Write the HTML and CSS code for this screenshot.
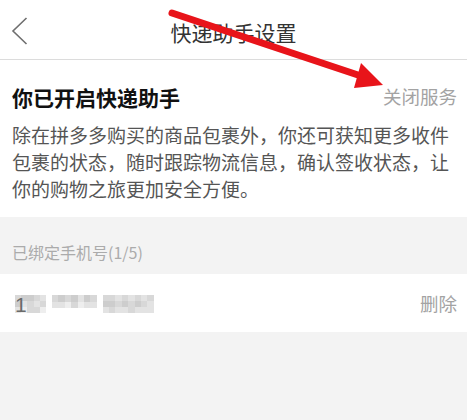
FILE: index.html
```html
<!DOCTYPE html>
<html lang="zh-CN">
<head>
<meta charset="utf-8">
<title>快递助手设置</title>
<link rel="stylesheet" href="styles.css">
</head>
<body>
<div class="page">
  <header class="header">
    <div class="back">
      <svg width="18" height="30" viewBox="0 0 18 30"><path d="M15.5 2 L2 15 L15.5 28" fill="none" stroke="#6f6f6f" stroke-width="1.6" stroke-linejoin="miter"/></svg>
    </div>
    <h1 class="title">快递助手设置</h1>
    <div class="spacer"></div>
  </header>

  <section class="intro">
    <div class="intro-head">
      <h2 class="intro-title">你已开启快递助手</h2>
      <span class="close">关闭服务</span>
    </div>
    <p class="intro-text">除在拼多多购买的商品包裹外，你还可获知更多收件包裹的状态，随时跟踪物流信息，确认签收状态，让你的购物之旅更加安全方便。</p>
  </section>

  <div class="label">已绑定手机号(1/5)</div>

  <div class="row">
    <div class="phone">
      <span class="mosaic m-a">
        <i class="c2"></i><i class="c1"></i><i class="c1"></i><i class="c2"></i><i class="c3"></i>
        <i class="c1"></i><i class="c3"></i><i class="c2"></i><i class="c3"></i><i class="c2"></i>
        <i class="c3"></i><i class="c4"></i><i class="c2"></i><i class="c2"></i><i class="c4"></i>
      </span>
      <span class="digit">1</span>
      <span class="mosaic m-b">
        <i class="c2"></i><i class="c1"></i><i class="c2"></i><i class="c1"></i><i class="c3"></i><i class="c1"></i><i class="c2"></i>
        <i class="c3"></i><i class="c3"></i><i class="c4"></i><i class="c2"></i><i class="c4"></i><i class="c3"></i><i class="c3"></i>
      </span>
      <span class="mosaic m-c">
        <i class="c2"></i><i class="c2"></i><i class="c3"></i><i class="c2"></i><i class="c3"></i><i class="c2"></i><i class="c3"></i><i class="c2"></i>
        <i class="c1"></i><i class="c1"></i><i class="c2"></i><i class="c1"></i><i class="c2"></i><i class="c1"></i><i class="c2"></i><i class="c3"></i>
        <i class="c3"></i><i class="c2"></i><i class="c3"></i><i class="c3"></i><i class="c2"></i><i class="c3"></i><i class="c3"></i><i class="c3"></i>
      </span>
    </div>
    <span class="delete">删除</span>
  </div>

  <svg class="arrow" width="467" height="420" viewBox="0 0 467 420">
    <line x1="172" y1="13" x2="364" y2="77" stroke="#e8141a" stroke-width="7" stroke-linecap="round"/>
    <polygon points="383,85 361,63 354,88" fill="#e8141a"/>
  </svg>
</div>
</body>
</html>
```

FILE: styles.css
```css
html, body {
  margin: 0;
  padding: 0;
}
body {
  background: #f3f3f3;
  font-family: "Noto Sans CJK SC", "Noto Sans", sans-serif;
  width: 467px;
  height: 420px;
  overflow: hidden;
}
.page {
  position: relative;
  width: 467px;
  height: 420px;
}
.header {
  height: 59px;
  background: #fff;
  border-bottom: 1px solid #dcdcdc;
  display: grid;
  grid-template-columns: 1fr auto 1fr;
  align-items: center;
}
.back {
  padding-left: 11px;
  display: flex;
  align-items: center;
  padding-top: 2px;
}
.title {
  margin: 0;
  font-size: 21px;
  font-weight: 400;
  color: #333;
  line-height: 28px;
  padding-top: 4px;
}
.intro {
  background: #fff;
  padding: 23px 10px 15px 12px;
}
.intro-head {
  display: flex;
  justify-content: space-between;
  align-items: center;
  height: 28px;
}
.intro-title {
  margin: 0;
  font-size: 21px;
  font-weight: 700;
  color: #111;
  line-height: 28px;
}
.close {
  font-size: 18.5px;
  color: #a3a3a3;
  line-height: 28px;
  margin-top: -2px;
}
.intro-text {
  margin: 10px 0 0 0;
  font-size: 19px;
  line-height: 27px;
  color: #555;
}
.label {
  height: 57px;
  box-sizing: border-box;
  padding: 25px 12px 0 12px;
  font-size: 16px;
  line-height: 20px;
  color: #ababab;
}
.row {
  height: 58px;
  background: #fff;
  display: flex;
  align-items: center;
  justify-content: space-between;
  padding: 0 10px 0 11px;
}
.phone {
  display: flex;
  align-items: flex-start;
  height: 20px;
  margin-top: 4px;
}
.digit {
  font-family: "Liberation Sans", sans-serif;
  font-size: 21px;
  line-height: 20px;
  color: #6a6a6a;
  width: 0;
  margin-left: -31px;
  margin-right: 31px;
  overflow: visible;
  position: relative;
}
.mosaic {
  display: grid;
  grid-auto-rows: 6px;
}
.mosaic i {
  display: block;
}
.m-a {
  grid-template-columns: repeat(5, 6.2px);
  margin-left: 4px;
}
.m-b {
  grid-template-columns: repeat(7, 6.4px);
  margin-left: 6px;
  grid-auto-rows: 6.5px;
}
.m-c {
  grid-template-columns: repeat(8, 6.4px);
  margin-left: 6px;
}
.c1 { background: #cdcdcd; }
.c2 { background: #d8d8d8; }
.c3 { background: #e3e3e3; }
.c4 { background: #eeeeee; }
.delete {
  font-size: 18.5px;
  color: #a3a3a3;
  line-height: 28px;
}
.arrow {
  position: absolute;
  left: 0;
  top: 0;
  pointer-events: none;
}
```
